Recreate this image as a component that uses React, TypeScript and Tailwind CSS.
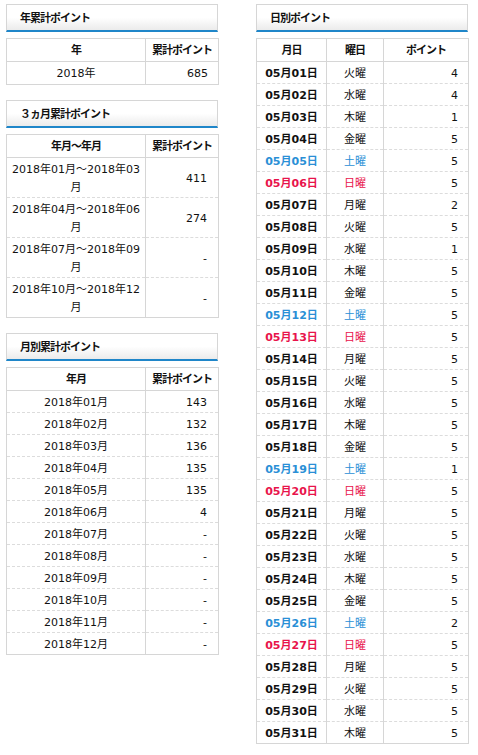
import React from "react";

const FONT = { fontFamily: '"DejaVu Sans", "Noto Sans CJK JP", sans-serif' };

function SectionHeader({ title }: { title: string }) {
  return (
    <div className="h-[28px] border border-[#d6d6d6] border-b-2 border-b-[#1f86c9] bg-gradient-to-b from-white via-white to-[#ebebeb] pl-[13px] pt-[4px] flex items-center">
      <span className="text-[11px] font-bold text-[#111] tracking-[-1px]">{title}</span>
    </div>
  );
}

const th = "h-[23px] border border-[#d6d6d6] text-[11px] font-bold text-[#111] tracking-[-1px] text-center p-0 pt-[3px]";

const days = [
  4, 4, 1, 5, 5, 5, 2, 5, 1, 5, 5, 5, 5, 5, 5, 5, 5, 5, 1, 5, 5, 5, 5, 5, 5, 2, 5, 5, 5, 5, 5,
];
const weekdays = ["月", "火", "水", "木", "金", "土", "日"];

const months = [
  ["2018年01月", "143"],
  ["2018年02月", "132"],
  ["2018年03月", "136"],
  ["2018年04月", "135"],
  ["2018年05月", "135"],
  ["2018年06月", "4"],
  ["2018年07月", "-"],
  ["2018年08月", "-"],
  ["2018年09月", "-"],
  ["2018年10月", "-"],
  ["2018年11月", "-"],
  ["2018年12月", "-"],
];

const quarters = [
  ["2018年01月～2018年03", "411"],
  ["2018年04月～2018年06", "274"],
  ["2018年07月～2018年09", "-"],
  ["2018年10月～2018年12", "-"],
];

function Cell({ children, className = "" }: { children: React.ReactNode; className?: string }) {
  return (
    <td
      className={`border-l border-r border-l-[#d6d6d6] border-r-[#d6d6d6] border-b border-b-[#dcdcdc] [border-bottom-style:dashed] text-[11px] p-0 pt-[3px] ${className}`}
    >
      {children}
    </td>
  );
}

export default function App() {
  return (
    <div className="w-[478px] min-h-[755px] bg-white pt-[4px] pl-[6px] flex gap-[38px] text-[#111]" style={FONT}>
      {/* Left column */}
      <div className="w-[212px] flex flex-col">
        <SectionHeader title="年累計ポイント" />
        <table className="mt-[6px] w-[212px] table-fixed border-collapse border border-[#d6d6d6]">
          <colgroup>
            <col className="w-[139px]" />
            <col className="w-[73px]" />
          </colgroup>
          <thead>
            <tr>
              <th className={th}>年</th>
              <th className={th}>累計ポイント</th>
            </tr>
          </thead>
          <tbody>
            <tr>
              <Cell className="h-[23px] text-center">2018年</Cell>
              <Cell className="h-[23px] text-right pr-[10px]">685</Cell>
            </tr>
          </tbody>
        </table>

        <div className="mt-[15px]">
          <SectionHeader title="３ヵ月累計ポイント" />
        </div>
        <table className="mt-[6px] w-[212px] table-fixed border-collapse border border-[#d6d6d6]">
          <colgroup>
            <col className="w-[139px]" />
            <col className="w-[73px]" />
          </colgroup>
          <thead>
            <tr>
              <th className={th}>年月～年月</th>
              <th className={th}>累計ポイント</th>
            </tr>
          </thead>
          <tbody>
            {quarters.map(([label, v]) => (
              <tr key={label}>
                <Cell className="h-[40px] text-center leading-[18px]">
                  {label}
                  <br />月
                </Cell>
                <Cell className="h-[40px] text-right pr-[11px]">{v}</Cell>
              </tr>
            ))}
          </tbody>
        </table>

        <div className="mt-[15px]">
          <SectionHeader title="月別累計ポイント" />
        </div>
        <table className="mt-[6px] w-[212px] table-fixed border-collapse border border-[#d6d6d6]">
          <colgroup>
            <col className="w-[139px]" />
            <col className="w-[73px]" />
          </colgroup>
          <thead>
            <tr>
              <th className={th}>年月</th>
              <th className={th}>累計ポイント</th>
            </tr>
          </thead>
          <tbody>
            {months.map(([label, v]) => (
              <tr key={label}>
                <Cell className="h-[22px] text-center">{label}</Cell>
                <Cell className="h-[22px] text-right pr-[11px]">{v}</Cell>
              </tr>
            ))}
          </tbody>
        </table>
      </div>

      {/* Right column */}
      <div className="w-[212px] flex flex-col">
        <SectionHeader title="日別ポイント" />
        <table className="mt-[6px] w-[212px] table-fixed border-collapse border border-[#d6d6d6]">
          <colgroup>
            <col className="w-[70px]" />
            <col className="w-[57px]" />
            <col className="w-[85px]" />
          </colgroup>
          <thead>
            <tr>
              <th className={th}>月日</th>
              <th className={th}>曜日</th>
              <th className={th}>ポイント</th>
            </tr>
          </thead>
          <tbody>
            {days.map((p, i) => {
              const wd = weekdays[(i + 1) % 7];
              const color =
                wd === "土" ? "text-[#2a8fd6]" : wd === "日" ? "text-[#e8134b]" : "text-[#111]";
              const d = String(i + 1).padStart(2, "0");
              return (
                <tr key={i}>
                  <Cell className={`h-[22px] text-center font-bold ${color}`}>05月{d}日</Cell>
                  <Cell className={`h-[22px] text-center ${color}`}>{wd}曜</Cell>
                  <Cell className="h-[22px] text-right pr-[10px]">{p}</Cell>
                </tr>
              );
            })}
          </tbody>
        </table>
      </div>
    </div>
  );
}
